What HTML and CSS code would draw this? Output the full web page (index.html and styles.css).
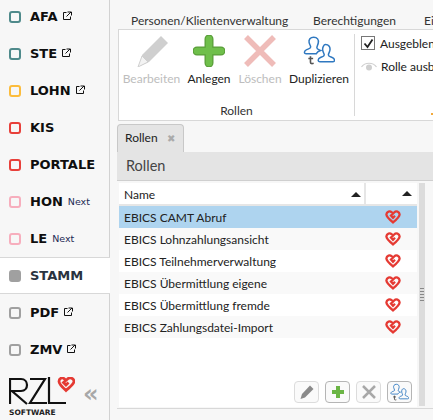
FILE: index.html
```html
<!DOCTYPE html>
<html lang="de">
<head>
<meta charset="utf-8">
<title>Rollen</title>
<link rel="stylesheet" href="styles.css">
</head>
<body>
<svg class="defs" width="0" height="0" aria-hidden="true">
  <symbol id="ext" viewBox="0 0 9 9"><path d="M3.500 1.500H.5v7h7V5.500M4.500 1H8.500V4.500M8 1L3.500 5.500" fill="none" stroke="#111" stroke-width="1"/></symbol>
  <symbol id="heart" viewBox="0 0 16 14"><path d="M8 3.500L6.600 2.200C5 .6 1.600 1.400 1.400 4.400 1.300 6.600 3 8.200 8 12.400 13 8.200 14.700 6.600 14.600 4.400 14.400 1.400 11 .6 9.400 2.200L6 5.600 8 7.800 10 5.800" fill="none" stroke="#e53a33" stroke-width="2.300"/></symbol>
  <symbol id="people" viewBox="0 0 30 30"><g fill="none" stroke="#2f78c0" stroke-width="1.400"><path d="M10 2c3.400 0 5 2.500 4.300 5.500-.4 2-1.300 3.300-1.300 4.500 0 1.500 2.500 1.800 3.500 2.500-2.500.5-3.500 2-4 3H3c-2.500 0-2-2.800.5-3.800 2-.8 3.700-1 3.700-2.400 0-1.300-1.200-2.400-1.500-4.300C5.200 4.500 6.800 2 10 2z"/><path d="M21 9c3.300 0 4.800 2.400 4.200 5.400-.4 2-1.400 3-1.400 4.300 0 1.400 2 1.700 3.600 2.400 2.500 1 2.900 3.900.6 3.900H16c-2.500 0-2.200-2.800.4-3.900 1.600-.7 3.500-1 3.500-2.400 0-1.300-1.100-2.300-1.400-4.300-.5-3 1.200-5.400 2.500-5.400z"/></g><path d="M7 20v5.500c0 1.500 1.500 1.500 3 1M5 22h4.500" fill="none" stroke="#555" stroke-width="1.500"/></symbol>
</svg>
<aside class="sidebar">
  <nav class="modules">
    <a class="mod"><i class="box teal"></i><b>AFA</b><svg class="ext"><use href="#ext"/></svg></a>
    <a class="mod"><i class="box teal"></i><b>STE</b><svg class="ext"><use href="#ext"/></svg></a>
    <a class="mod"><i class="box amber"></i><b>LOHN</b><svg class="ext"><use href="#ext"/></svg></a>
    <a class="mod"><i class="box red"></i><b>KIS</b></a>
    <a class="mod"><i class="box red"></i><b>PORTALE</b></a>
    <a class="mod"><i class="box pink"></i><b>HON</b><small>Next</small></a>
    <a class="mod"><i class="box pink"></i><b>LE</b><small>Next</small></a>
    <a class="mod active"><i class="box solid"></i><b>STAMM</b></a>
    <a class="mod"><i class="box grey"></i><b>PDF</b><svg class="ext"><use href="#ext"/></svg></a>
    <a class="mod"><i class="box grey"></i><b>ZMV</b><svg class="ext"><use href="#ext"/></svg></a>
  </nav>
  <div class="brand">
    <div class="logo">
      <svg class="logo-mark" width="66" height="28" viewBox="0 0 66 28"><path d="M1 27V2H12C20 2 20 14 12 14H3L18 27M21 2H36L21 26H38M40 0V26H57" fill="none" stroke="#111" stroke-width="2.200"/><path d="M57 3.500L55.500 2C53.500 0 50 1 50 4.500 50 7 52 9 57 13.500 62 9 65 7 65 4.500 65 1 60.500 0 58.500 2L54.500 5.500 57 8 59.500 5.500" fill="none" stroke="#e53a33" stroke-width="2.800"/></svg>
      <span class="software">SOFTWARE</span>
    </div>
    <span class="collapse">«</span>
  </div>
</aside>
<main class="main">
  <div class="tabs">
    <span class="t1">Personen/Klientenverwaltung</span>
    <span class="t2">Berechtigungen</span>
    <span class="t3">Einstellungen</span>
  </div>
  <section class="ribbon">
    <div class="group">
      <div class="tools">
        <div class="tool off">
          <svg width="32" height="32" viewBox="0 0 32 32"><path d="M25 1L32 8 13 27 4 31 6 20z" fill="#cfcfcf"/><path d="M6 21L12 27 2 32z" fill="#f3f3f3" stroke="#cfcfcf"/></svg>
          <span>Bearbeiten</span>
        </div>
        <div class="tool">
          <svg width="32" height="32" viewBox="0 0 32 32"><path d="M16 4V28M4 16H28" stroke="#5a9e3a" stroke-width="9" stroke-linecap="round"/><path d="M16 4V28M4 16H28" stroke="#6fbf4b" stroke-width="6.500" stroke-linecap="round"/></svg>
          <span>Anlegen</span>
        </div>
        <div class="tool off">
          <svg width="32" height="32" viewBox="0 0 32 32"><path d="M2 2L30 30M30 2L2 30" stroke="#efbcb9" stroke-width="5.500"/></svg>
          <span>Löschen</span>
        </div>
        <div class="tool">
          <svg width="32" height="32"><use href="#people"/></svg>
          <span>Duplizieren</span>
        </div>
      </div>
      <div class="group-name">Rollen</div>
    </div>
    <div class="opts">
      <label class="opt"><i class="check"><svg width="11" height="11" viewBox="0 0 11 11"><path d="M1.500 5.500L4.500 9 9.500 1.500" fill="none" stroke="#222" stroke-width="1.800"/></svg></i>Ausgeblendete</label>
      <div class="opt"><svg class="eye" width="16" height="10" viewBox="0 0 16 10"><path d="M.5 6C4 1 12 1 15.500 6" fill="none" stroke="#cfcfcf" stroke-width="1.200"/><circle cx="8" cy="6.500" r="3" fill="#cfcfcf"/></svg>Rolle ausblenden</div>
      <i class="speck"></i>
    </div>
  </section>
  <div class="doc-tabs"><div class="doc-tab">Rollen<span class="close">✖</span></div></div>
  <section class="panel">
    <h2 class="panel-title">Rollen</h2>
    <div class="panel-body">
      <div class="grid">
        <div class="row head"><span class="name">Name<i class="sort"></i></span><span class="flag"><i class="sort"></i></span></div>
        <div class="row sel"><span class="name">EBICS CAMT Abruf</span><span class="flag"><svg class="heart"><use href="#heart"/></svg></span></div>
        <div class="row alt"><span class="name">EBICS Lohnzahlungsansicht</span><span class="flag"><svg class="heart"><use href="#heart"/></svg></span></div>
        <div class="row"><span class="name">EBICS Teilnehmerverwaltung</span><span class="flag"><svg class="heart"><use href="#heart"/></svg></span></div>
        <div class="row alt"><span class="name">EBICS Übermittlung eigene</span><span class="flag"><svg class="heart"><use href="#heart"/></svg></span></div>
        <div class="row"><span class="name">EBICS Übermittlung fremde</span><span class="flag"><svg class="heart"><use href="#heart"/></svg></span></div>
        <div class="row alt"><span class="name">EBICS Zahlungsdatei-Import</span><span class="flag"><svg class="heart"><use href="#heart"/></svg></span></div>
        <div class="actions">
          <button class="btn"><svg width="16" height="16" viewBox="0 0 16 16"><path d="M11 1.500L14.500 5 6 13.500 1.500 15 3 10z" fill="#8a8a8a"/></svg></button>
          <button class="btn strong"><svg width="16" height="16" viewBox="0 0 16 16"><path d="M8 2V14M2 8H14" stroke="#6bb545" stroke-width="4"/></svg></button>
          <button class="btn"><svg width="16" height="16" viewBox="0 0 16 16"><path d="M2 2L14 14M14 2L2 14" stroke="#a8a8a8" stroke-width="2.500"/></svg></button>
          <button class="btn strong"><svg width="19" height="19"><use href="#people"/></svg></button>
        </div>
      </div>
      <div class="scroll"><i class="grip"></i></div>
    </div>
  </section>
  <div class="foot"></div>
</main>
</body>
</html>
```
FILE: styles.css
```css
* { box-sizing: border-box; }
html, body { margin: 0; height: 420px; overflow: hidden; }
body { display: flex; width: 433px; background: #f7f7f7; font: 12px Lato, sans-serif; color: #222; }
.defs { position: absolute; }

.sidebar { width: 110px; height: 420px; flex: none; display: flex; flex-direction: column; background: #f7f7f7; border-right: 1px solid #d2d2d2; }
.modules { display: flex; flex-direction: column; margin-top: -2px; }
.mod { height: 37px; display: flex; align-items: center; padding-left: 9px; margin-right: -1px; }
.mod.active { background: #fff; border-top: 1px solid #d8d8d8; border-bottom: 1px solid #d8d8d8; position: relative; }
.mod b { margin-left: 9px; font: bold 13px "DejaVu Sans", sans-serif; color: #0e0e0e; }
.mod.active b { color: #2a3340; }
.mod small { margin-left: 5px; font: 9.500px "DejaVu Sans", sans-serif; color: #1d2a55; }
.ext { width: 9px; height: 9px; margin-left: 5px; margin-top: -3px; }
.box { width: 12px; height: 12px; border: 2px solid; border-radius: 3px; flex: none; }
.teal { border-color: #4f8a8b; }
.amber { border-color: #fcbc3c; }
.red { border-color: #e8403a; }
.pink { border-color: #f7aebd; }
.grey { border-color: #a0a0a0; }
.solid { background: #a0a0a0; border-color: #a0a0a0; }

.brand { display: flex; align-items: center; padding: 9px 0 0 9px; gap: 8px; }
.logo { display: flex; flex-direction: column; }
.logo-mark { display: block; }
.software { font: bold 7.500px "DejaVu Sans", sans-serif; color: #222; margin-top: 3px; line-height: 9px; }
.collapse { font: bold 24px "DejaVu Sans", sans-serif; color: #a8a8a8; line-height: 1; margin-top: -6px; }

.main { flex: 1; min-width: 0; display: flex; flex-direction: column; overflow: hidden; padding-left: 7px; }
.tabs { height: 29px; flex: none; display: flex; padding: 12px 0 0 14px; white-space: nowrap; line-height: 17px; color: #333; }
.tabs span { flex: none; }
.t1 { width: 182px; }
.t2 { width: 111px; }

.ribbon { height: 92px; flex: none; display: flex; background: #fff; border: 1px solid #d8d8d8; border-right: 0; margin-left: 1px; white-space: nowrap; overflow: hidden; }
.group { width: 235px; flex: none; display: flex; flex-direction: column; }
.tools { display: flex; padding: 5px 0 0; }
.tool { display: flex; flex-direction: column; align-items: center; gap: 3px; width: 65px; line-height: 17px; color: #222; flex: none; }
.tool:nth-child(2) { width: 50px; }
.tool:nth-child(3) { width: 52px; }
.tool:nth-child(4) { width: 66px; }
.tool.off { color: #bdbdbd; }
.group-name { text-align: center; margin-top: 15px; line-height: 17px; color: #333; }
.opts { margin: 4px 0 4px 0; border-left: 1px solid #d8d8d8; padding: 0 0 0 6px; display: flex; flex-direction: column; gap: 5px; flex: 1; min-width: 0; }
.opt { display: flex; align-items: center; height: 18px; gap: 4px; }
.check { width: 14px; height: 14px; border: 1px solid #777; background: #fff; display: flex; align-items: center; justify-content: center; margin-right: 1px; flex: none; }
.eye { flex: none; }
.speck { margin-top: auto; margin-bottom: 1px; align-self: flex-end; width: 2px; height: 2px; background: #f2a93b; }

.doc-tabs { height: 31px; flex: none; display: flex; align-items: flex-end; }
.doc-tab { height: 28px; width: 67px; background: #e4e4e4; border: 1px solid #c8c8c8; border-bottom: 0; border-radius: 4px 4px 0 0; padding-left: 7px; line-height: 26px; }
.close { margin-left: 9px; font-size: 10px; color: #aaa; }

.panel { flex: 1; display: flex; flex-direction: column; min-height: 0; }
.panel-title { margin: 0; height: 29px; flex: none; background: #e4e4e4; border-bottom: 1px solid #cfcfcf; font: 14.500px/28px Lato, sans-serif; color: #444; padding-left: 9px; }
.panel-body { flex: 1; display: flex; margin-left: 2px; padding-top: 2px; min-height: 0; }
.grid { width: 298px; flex: none; background: #fff; display: flex; flex-direction: column; }
.row { height: 22px; flex: none; display: flex; align-items: center; line-height: 17px; color: #222; }
.head { height: 23px; border-bottom: 2px solid #e6e6e6; }
.sel { background: #aed4ef; }
.alt { background: #f9f9f9; }
.name { width: 247px; height: 100%; display: flex; align-items: center; justify-content: space-between; padding: 1px 3px 0 5px; flex: none; }
.flag { width: 51px; height: 100%; display: flex; align-items: center; justify-content: center; }
.head .name { border-right: 2px solid #e6e6e6; padding-right: 3px; }
.head .flag { justify-content: flex-end; padding-right: 5px; }
.sort { width: 0; height: 0; border: 5px solid transparent; border-top: 0; border-bottom: 5px solid #222; }
.heart { width: 16px; height: 14px; margin-left: 2px; }
.actions { margin-top: auto; height: 26px; display: flex; justify-content: flex-end; gap: 6px; padding: 0 5px 3px 0; align-items: flex-start; }
.btn { width: 25px; height: 22px; padding: 0; display: flex; align-items: center; justify-content: center; background: #fafafa; border: 1px solid #dcdcdc; border-radius: 4px; }
.btn.strong { border-color: #b5b5b5; }
.scroll { width: 6px; margin-left: 2px; height: 223px; background: #dcdcdc; display: flex; align-items: center; justify-content: center; flex: none; }
.grip { width: 4px; height: 14px; background: repeating-linear-gradient(#888 0 1px, transparent 1px 3px); }
.foot { height: 12px; flex: none; border-top: 1px solid #d8d8d8; margin-top: 1px; background: #f7f7f7; }
```
